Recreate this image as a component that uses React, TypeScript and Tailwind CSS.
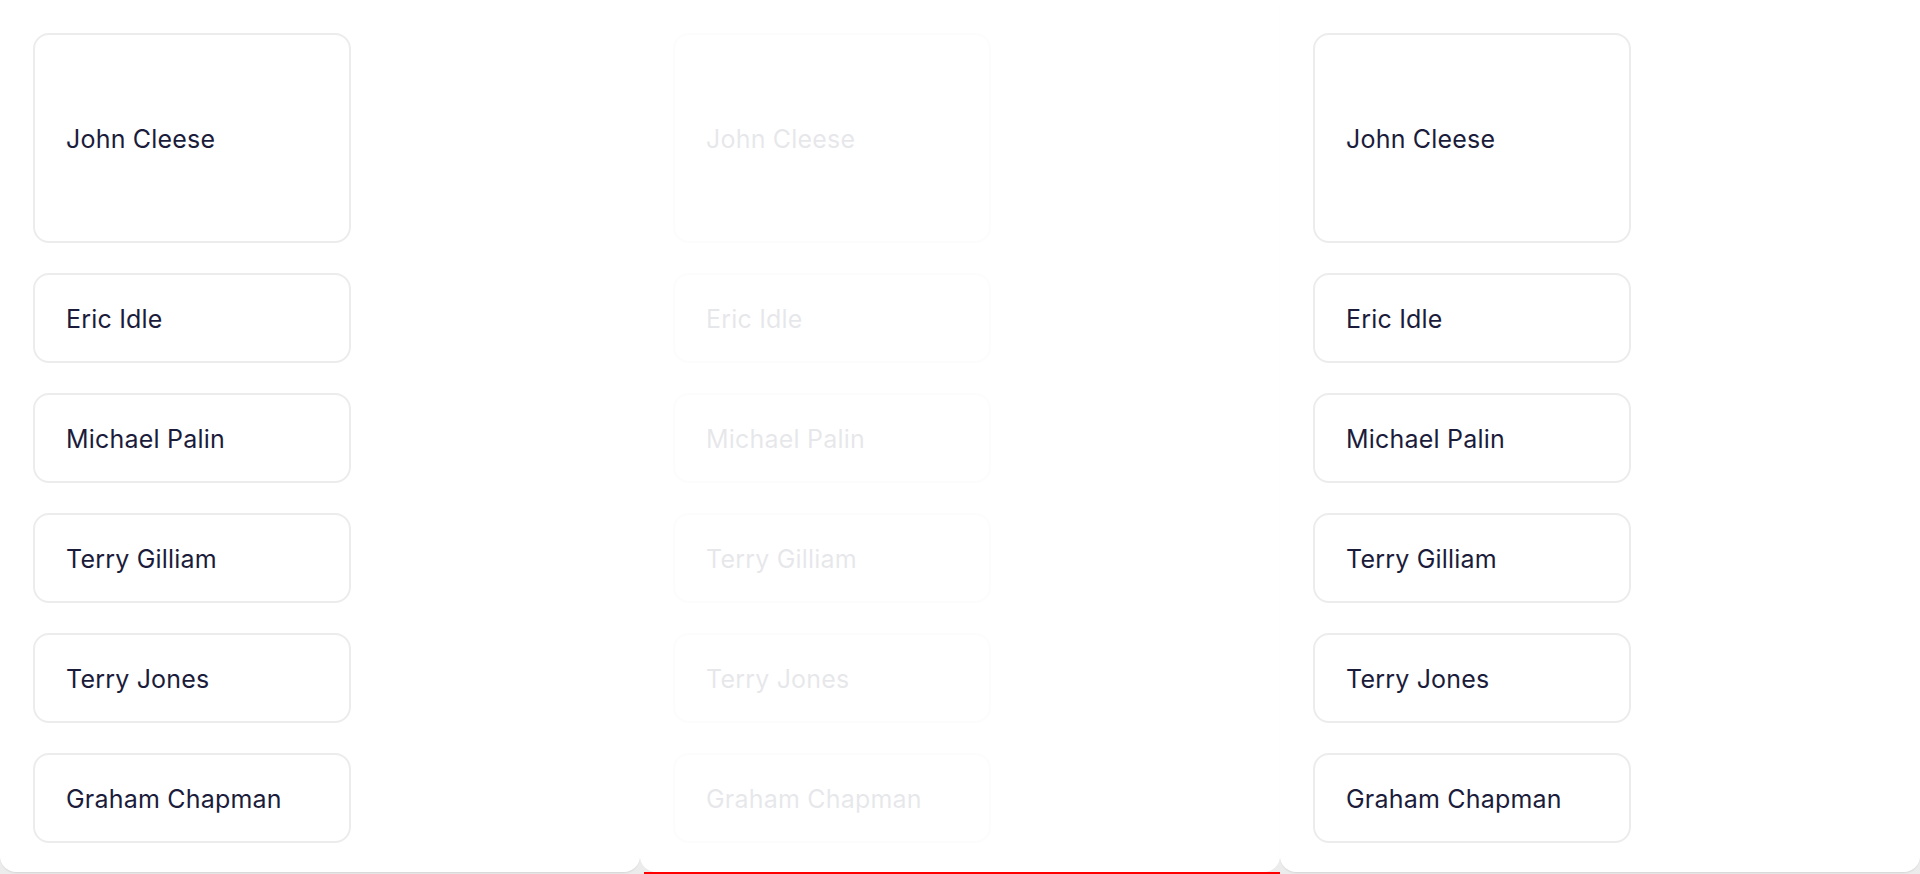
import React from 'react';

const members = ['Eric Idle', 'Michael Palin', 'Terry Gilliam', 'Terry Jones', 'Graham Chapman'];

const MemberCard: React.FC<{ name: string; tall?: boolean }> = ({ name, tall }) => (
  <div
    className={`w-[318px] ${tall ? 'h-[210px]' : 'h-[90px]'} flex items-center rounded-[16px] border-2 border-[#ececec] bg-white pl-[31px] pt-[4px] text-[25px] tracking-[0.2px] text-[#1b1c3b]`}
  >
    {name}
  </div>
);

const Panel: React.FC<{ faded?: boolean }> = ({ faded }) => (
  <div className="flex w-[640px] flex-col">
    <div
      className={`h-[872px] rounded-b-[16px] bg-white ${faded ? 'shadow-[0_2px_2px_-1px_rgba(0,0,0,0.02)]' : 'shadow-[0_2px_2px_-1px_rgba(0,0,0,0.1)]'}`}
    >
      <div className={`flex flex-col gap-[30px] pl-[33px] pt-[33px] ${faded ? 'opacity-10' : ''}`}>
        <MemberCard name="John Cleese" tall />
        {members.map((m) => (
          <MemberCard key={m} name={m} />
        ))}
      </div>
    </div>
    {faded && <div className="ml-[4px] h-[2px] bg-[#ff0000]" />}
  </div>
);

export default function App() {
  return (
    <div
      className="flex h-[874px] w-[1920px] overflow-hidden bg-[#ececec]"
      style={{ fontFamily: 'Inter, "Noto Sans", sans-serif' }}
    >
      <Panel />
      <Panel faded />
      <Panel />
    </div>
  );
}
